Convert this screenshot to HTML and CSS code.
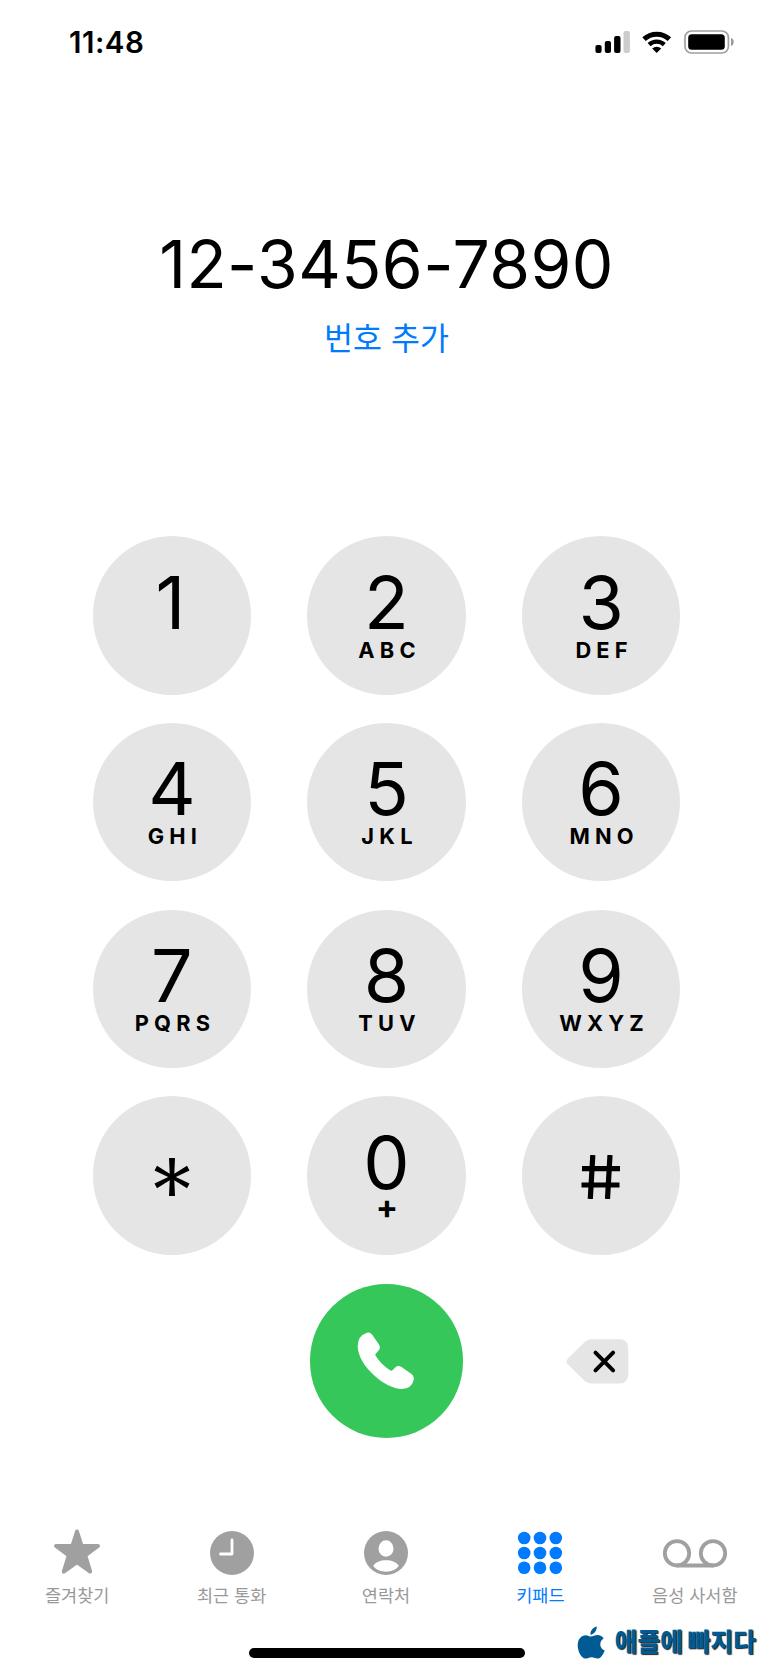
FILE: index.html
```html
<!DOCTYPE html>
<html lang="ko">
<head>
  <meta charset="utf-8">
  <title>키패드</title>
  <link rel="stylesheet" href="styles.css">
</head>
<body>
  <div class="phone">
    <header class="status-bar">
      <span class="time">11:48</span>
      <svg class="status-icons" width="140" height="26" viewBox="0 0 140 26">
        <rect x="1.4" y="16" width="6.2" height="8" rx="2"/>
        <rect x="10.8" y="12" width="6.2" height="12" rx="2"/>
        <rect x="20.1" y="7" width="6.4" height="17" rx="2"/>
        <rect x="29.5" y="2" width="6.4" height="22" rx="2" fill="#ccc"/>
        <path d="M50 10.2a18.7 18.7 0 0 1 25.4 0" fill="none" stroke="#000" stroke-width="5"/>
        <path d="M55.1 15.6a11.2 11.2 0 0 1 15.2 0" fill="none" stroke="#000" stroke-width="4.3"/>
        <path d="M58.2 19.4a6.8 6.8 0 0 1 9 0L62.7 24z"/>
        <rect x="91" y="2" width="43.4" height="22" rx="6.5" fill="none" stroke="#a0a0a0" stroke-width="1.7"/>
        <rect x="94.2" y="5.2" width="36.6" height="15.6" rx="3.5"/>
        <path d="M137 9c3.6 1 3.6 7 0 8z" fill="#999"/>
      </svg>
    </header>

    <div class="display">
      <div class="number">12-3456-7890</div>
      <a class="add-number">번호 추가</a>
    </div>

    <div class="keypad">
      <div class="key"><span class="digit one">1</span></div>
      <div class="key"><span class="digit">2</span><span class="letters">ABC</span></div>
      <div class="key"><span class="digit">3</span><span class="letters">DEF</span></div>
      <div class="key"><span class="digit">4</span><span class="letters">GHI</span></div>
      <div class="key"><span class="digit">5</span><span class="letters">JKL</span></div>
      <div class="key"><span class="digit">6</span><span class="letters">MNO</span></div>
      <div class="key"><span class="digit">7</span><span class="letters">PQRS</span></div>
      <div class="key"><span class="digit">8</span><span class="letters">TUV</span></div>
      <div class="key"><span class="digit">9</span><span class="letters">WXYZ</span></div>
      <div class="key symbol">
        <svg width="36" height="38" viewBox="0 0 36 38">
          <path d="M15 0h6l-.7 15.7L33 7.8l2.5 4.6L21.8 19l13.7 6.6-2.5 4.6-12.7-7.9L21 38h-6l.7-15.7L3 30.2.5 25.6 14.2 19 .5 12.4 3 7.8 15.7 15.7z"/>
        </svg>
      </div>
      <div class="key"><span class="digit">0</span><span class="letters plus">+</span></div>
      <div class="key symbol">
        <svg width="40" height="44" viewBox="0 0 40 44">
          <path d="M11.8 0 9.3 44M29 0l-2.5 44M1 13.6h38M.5 30h38" fill="none" stroke="#000" stroke-width="5.2"/>
        </svg>
      </div>
    </div>

    <div class="actions">
      <div class="call">
        <svg width="58" height="58" viewBox="0 0 58 58">
          <path d="M10 .7Q13 0 15 2.6L22 12.6Q24 16 21.6 18.6L18.7 21.7Q18 22.5 18.5 23.5Q23 31.5 33 38.3Q34.4 39.2 35.5 38.3L38.2 35.5Q41 33 44.5 35L54.5 42Q57.4 44.3 56.7 48Q54.7 56.5 45 57C30 57.5 1 35 .7 14Q.5 4 10 .7z" fill="#fff"/>
        </svg>
      </div>
      <svg class="delete" width="63" height="45" viewBox="0 0 63 45">
        <path d="M1.5 20 18.5 3.2Q21.5.2 26 .2H53Q62.3.2 62.3 9.5V35Q62.3 44.6 53 44.6H26Q21.5 44.6 18.5 41.8L1.5 25Q-.5 22.5 1.5 20z" fill="#e5e5e5"/>
        <path d="m29.5 13.7 17.6 17.6m0-17.6L29.5 31.3" stroke="#000" stroke-width="4" stroke-linecap="round"/>
      </svg>
    </div>

    <nav class="tabs">
      <div class="tab">
        <svg width="48" height="48" viewBox="0 0 48 48">
          <path d="M24 3.5 28.6 18H45L32.2 27.4 37.2 43.6 24 34.2 10.8 43.6 15.8 27.4 3 18h16.4z" stroke="#a0a0a0" stroke-width="4" stroke-linejoin="round"/>
        </svg>
        <span>즐겨찾기</span>
      </div>
      <div class="tab">
        <svg width="48" height="48" viewBox="0 0 48 48">
          <circle cx="24" cy="25" r="22"/>
          <path d="M24 12v14H12.5" fill="none" stroke="#fff" stroke-width="2.8" stroke-linecap="round" stroke-linejoin="round"/>
        </svg>
        <span>최근 통화</span>
      </div>
      <div class="tab">
        <svg width="48" height="48" viewBox="0 0 48 48">
          <circle cx="24" cy="25" r="22"/>
          <ellipse cx="24" cy="20.5" rx="7.5" ry="8.3" fill="#fff"/>
          <path d="M11.2 38C15 30.2 33 30.2 36.8 38 31 45.6 17 45.6 11.2 38z" fill="#fff"/>
        </svg>
        <span>연락처</span>
      </div>
      <div class="tab active">
        <svg width="48" height="48" viewBox="0 0 48 48">
          <circle cx="8.2" cy="10" r="6.3"/><circle cx="24" cy="10" r="6.3"/><circle cx="39.8" cy="10" r="6.3"/>
          <circle cx="8.2" cy="25" r="6.3"/><circle cx="24" cy="25" r="6.3"/><circle cx="39.8" cy="25" r="6.3"/>
          <circle cx="8.2" cy="39.8" r="6.3"/><circle cx="24" cy="39.8" r="6.3"/><circle cx="39.8" cy="39.8" r="6.3"/>
        </svg>
        <span>키패드</span>
      </div>
      <div class="tab">
        <svg width="66" height="48" viewBox="0 0 66 48">
          <g fill="none" stroke="#a0a0a0" stroke-width="3.8">
            <circle cx="15" cy="25.3" r="12.2"/>
            <circle cx="51" cy="25.3" r="12.2"/>
            <path d="M15 37.5h36"/>
          </g>
        </svg>
        <span>음성 사서함</span>
      </div>
    </nav>

    <div class="home-bar"></div>

    <div class="watermark">
      <svg width="28" height="33" viewBox="0 0 28 33">
        <path d="M19.7.5C20 4.5 17 8.5 13.4 8.6 13 4.7 16.5 1 19.7.5z"/>
        <path d="M14 10.6C16 10.6 17.5 9 20.600 9c2.5 0 4.8 1.400 6.100 3.400-5.1 3-4.3 10 1 12C26 29 23.5 32.5 20.8 32.5c-2.4 0-3.5-1.3-6.2-1.3s-4 1.400-6.2 1.400C4.500 32.5.7 25.5.7 19 .7 13 4.5 9.2 8.6 9.2c2.4 0 4 1.400 5.400 1.400z"/>
      </svg>
      <span>애플에 빠지다</span>
    </div>
  </div>
</body>
</html>
```
FILE: styles.css
```css
* {
  box-sizing: border-box;
}
body {
  margin: 0;
  background-color: #fff;
  font-family: Inter, "Noto Sans CJK KR", sans-serif;
  color: #000;
}
.phone {
  position: relative;
  display: flex;
  flex-direction: column;
  width: 773px;
  height: 1673px;
  overflow: hidden;
}

/* clock, signal, wifi, battery */
.status-bar {
  display: flex;
  justify-content: space-between;
  align-items: center;
  height: 84px;
  padding: 0 39px 0 69px;
}
.time {
  font-size: 29.5px;
  font-weight: 600;
  letter-spacing: 0.5px;
}

.display {
  display: flex;
  flex-direction: column;
  align-items: center;
  height: 452px;
  padding-top: 140px;
}
.number {
  font-size: 66px;
  line-height: 80px;
  letter-spacing: 0.4px;
  white-space: nowrap;
}
.add-number {
  margin-top: 12px;
  font-size: 31.5px;
  line-height: 46px;
  color: #007aff;
}

/* 3 x 4 grid of round keys */
.keypad {
  display: grid;
  grid-template-columns: repeat(3, 158.6px);
  grid-auto-rows: 158.6px;
  gap: 28.2px 56px;
  justify-content: center;
}
.key {
  display: flex;
  flex-direction: column;
  align-items: center;
  padding-top: 30.5px;
  border-radius: 50%;
  background-color: #e5e5e5;
}
.digit {
  font-size: 73.5px;
  line-height: 72px;
}
.one {
  padding-right: 3px;
}
.letters {
  padding-left: 6px;
  font-size: 21.8px;
  font-weight: 700;
  line-height: 23px;
  letter-spacing: 5.2px;
}
.plus {
  font-size: 33px;
  line-height: 16px;
}
.symbol {
  justify-content: center;
  padding-top: 3px;
}

.actions {
  display: grid;
  grid-template-columns: repeat(3, 158.6px);
  column-gap: 56px;
  justify-content: center;
  align-items: center;
  justify-items: center;
  margin-top: 29.5px;
}
.call {
  display: flex;
  grid-column: 2;
  justify-content: center;
  align-items: center;
  width: 153.4px;
  height: 153.4px;
  border-radius: 50%;
  background-color: #35c759;
}
.delete {
  margin-right: 7px;
}

.tabs {
  display: grid;
  grid-template-columns: repeat(5, 1fr);
  width: 772px;
  margin-top: 90px;
}
.tab {
  display: flex;
  flex-direction: column;
  align-items: center;
  font-size: 17.5px;
  line-height: 24px;
  color: #999;
  fill: #a0a0a0;
}
.tab span {
  margin-top: 8px;
}
.active {
  color: #007aff;
  fill: #007aff;
}

.home-bar {
  width: 276px;
  height: 9.5px;
  margin: 40.5px auto 0;
  border-radius: 5px;
  background-color: #000;
}

/* blog mark over the bottom right corner */
.watermark {
  position: absolute;
  right: 17px;
  bottom: 14px;
  display: flex;
  align-items: center;
  gap: 10px;
  font-size: 24.7px;
  font-weight: 900;
  line-height: 34px;
  color: #005a94;
  fill: #005a94;
  text-shadow: 1px 1px 1px #222;
}
```
